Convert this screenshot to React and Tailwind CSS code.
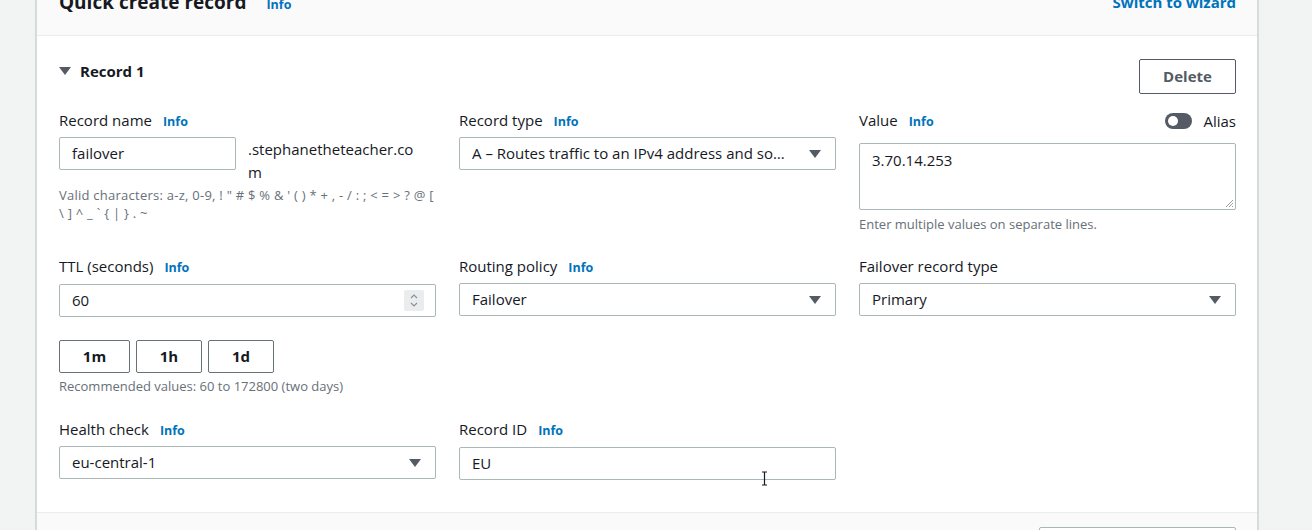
import React from "react"

const FONT = { fontFamily: '"Open Sans", "Noto Sans", Arial, sans-serif' }

function Info() {
  return <span className="text-[12.5px] font-bold text-[#0073bb] leading-none">Info</span>
}

function Label({ children, info = true }) {
  return (
    <div className="flex items-baseline gap-[11px] h-[18px] pt-[1px] text-[15px] text-[#16191f] leading-none">
      <span>{children}</span>
      {info && <Info />}
    </div>
  )
}

function Caret() {
  return (
    <svg width="12" height="8" viewBox="0 0 12 8" className="shrink-0">
      <path d="M0 0 H12 L6 8 Z" fill="#545b64" />
    </svg>
  )
}

function Select({ value }) {
  return (
    <div className="h-[33px] mt-[7px] border border-[#aab7b8] rounded-[2px] pl-[12px] pr-[14px] flex items-center justify-between gap-[12px] bg-white">
      <span className="truncate text-[15px] text-[#16191f]">{value}</span>
      <Caret />
    </div>
  )
}

function TextInput({ value, className = "" }) {
  return (
    <div className={`h-[33px] border border-[#aab7b8] rounded-[2px] px-[12px] flex items-center bg-white ${className}`}>
      <span className="text-[15px] text-[#16191f]">{value}</span>
    </div>
  )
}

function Hint({ children, className = "" }) {
  return <div className={`text-[13px] leading-[18px] text-[#687078] ${className}`}>{children}</div>
}

function QuickButton({ children, w }) {
  return (
    <button className={`h-[33px] ${w} border border-[#687078] rounded-[2px] text-[15px] font-bold text-[#16191f] bg-white`}>
      {children}
    </button>
  )
}

export default function App() {
  return (
    <div className="h-[530px] w-[1312px] overflow-hidden bg-[#f2f3f3] flex" style={FONT}>
      <div className="ml-[35px] w-[1224px] h-[560px] border-l-2 border-r-2 border-[#d5dbdb] bg-white flex flex-col">
        {/* Header */}
        <div className="h-[36px] shrink-0 bg-[#fafafa] border-b border-[#eaeded] pl-[22px] pr-[21px] flex justify-between items-start overflow-hidden">
          <div className="flex items-baseline gap-[20px] -mt-[12px]">
            <span className="text-[19px] font-bold text-[#16191f]">Quick create record</span>
            <Info />
          </div>
          <span className="text-[15px] font-bold text-[#0073bb] -mt-[9px]">Switch to wizard</span>
        </div>

        {/* Body */}
        <div className="relative h-[477px] shrink-0 border-b border-[#eaeded] pl-[22px] pr-[21px] pt-[23px]">
          <div className="flex justify-between items-start">
            <div className="flex items-center gap-[9px] mt-[2px] h-[20px]">
              <Caret />
              <span className="text-[15px] font-bold text-[#16191f]">Record 1</span>
            </div>
            <button className="w-[97px] h-[35px] border border-[#545b64] rounded-[2px] text-[15px] font-bold text-[#545b64] bg-white">
              Delete
            </button>
          </div>

          {/* Row 1 */}
          <div className="grid grid-cols-3 gap-x-[23px] items-start mt-[18px]">
            <div>
              <Label>Record name</Label>
              <div className="flex items-start gap-[12px] mt-[7px]">
                <TextInput value="failover" className="w-[177px] shrink-0" />
                <div className="text-[15px] leading-[23px] text-[#16191f] pt-[1px]">
                  .stephanetheteacher.co
                  <br />m
                </div>
              </div>
              <Hint className="mt-[2px] tracking-[0.25px]">
                Valid characters: a-z, 0-9, ! " # $ % &amp; ' ( ) * + , - / : ; &lt; = &gt; ? @ [
                <br />
                \ ] ^ _ ` {"{"} | {"}"} . ~
              </Hint>
            </div>
            <div>
              <Label>Record type</Label>
              <Select value="A – Routes traffic to an IPv4 address and some AWS resources" />
            </div>
            <div>
              <div className="flex justify-between items-center h-[18px]">
                <Label>Value</Label>
                <div className="flex items-center gap-[11px]">
                  <div className="w-[27px] h-[16px] rounded-full bg-[#545b64] flex items-center pl-[3px]">
                    <div className="w-[10px] h-[10px] rounded-full bg-white" />
                  </div>
                  <span className="text-[15px] text-[#16191f]">Alias</span>
                </div>
              </div>
              <div className="relative h-[67px] mt-[13px] border border-[#aab7b8] rounded-[2px] px-[12px] pt-[5px]">
                <div className="text-[15px] text-[#16191f]">3.70.14.253</div>
                <svg width="9" height="9" viewBox="0 0 9 9" className="absolute right-[1px] bottom-[1px]">
                  <path d="M8 1 L1 8 M8 4 L4 8 M8 7 L7 8" stroke="#9aa0a6" strokeWidth="1" />
                </svg>
              </div>
              <Hint className="mt-[5px]">Enter multiple values on separate lines.</Hint>
            </div>
          </div>

          {/* Row 2 */}
          <div className="grid grid-cols-3 gap-x-[23px] items-start mt-[25px]">
            <div>
              <Label>TTL (seconds)</Label>
              <div className="h-[33px] mt-[8px] border border-[#aab7b8] rounded-[2px] pl-[12px] pr-[11px] flex items-center justify-between">
                <span className="text-[15px] text-[#16191f]">60</span>
                <div className="w-[20px] h-[21px] bg-[#eaeded] rounded-[2px] flex items-center justify-center">
                  <svg width="10" height="15" viewBox="0 0 10 15">
                    <path d="M2 5 L5 2 L8 5 M2 10 L5 13 L8 10" fill="none" stroke="#879196" strokeWidth="1.2" />
                  </svg>
                </div>
              </div>
              <div className="flex gap-[6px] mt-[23px]">
                <QuickButton w="w-[71px]">1m</QuickButton>
                <QuickButton w="w-[66px]">1h</QuickButton>
                <QuickButton w="w-[66px]">1d</QuickButton>
              </div>
              <Hint className="mt-[4px]">Recommended values: 60 to 172800 (two days)</Hint>
            </div>
            <div>
              <Label>Routing policy</Label>
              <div className="mt-[1px]">
                <Select value="Failover" />
              </div>
            </div>
            <div>
              <Label info={false}>Failover record type</Label>
              <div className="mt-[1px]">
                <Select value="Primary" />
              </div>
            </div>
          </div>

          {/* Row 3 */}
          <div className="grid grid-cols-3 gap-x-[23px] items-start mt-[26px]">
            <div>
              <Label>Health check</Label>
              <div className="mt-[1px]">
                <Select value="eu-central-1" />
              </div>
            </div>
            <div>
              <Label>Record ID</Label>
              <TextInput value="EU" className="mt-[8px]" />
            </div>
            <div />
          </div>

          {/* mouse cursor */}
          <svg width="7" height="15" viewBox="0 0 7 15" className="absolute left-[724px] top-[435px]">
            <path d="M1 1 H6 M3.5 1 V14 M1 14 H6" stroke="#16191f" strokeWidth="1.2" fill="none" />
          </svg>
        </div>

        {/* Footer */}
        <div className="flex-1 bg-[#fafafa] flex justify-end pr-[21px] pt-[14px]">
          <div className="w-[197px] h-[33px] border border-[#aab7b8] rounded-[2px] bg-white" />
        </div>
      </div>
    </div>
  )
}
